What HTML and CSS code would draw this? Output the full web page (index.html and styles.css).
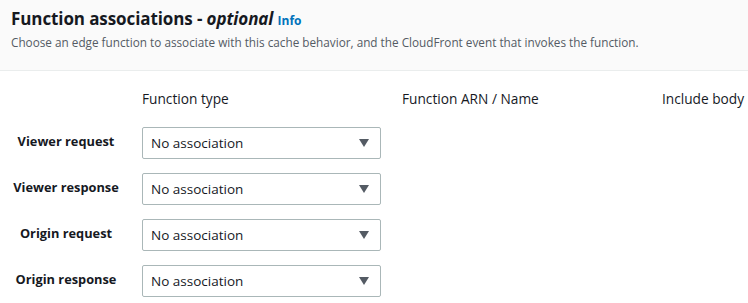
FILE: index.html
```html
<!DOCTYPE html>
<html lang="en">
<head>
    <meta charset="UTF-8">
    <title>Function associations</title>
    <link rel="stylesheet" href="styles.css">
</head>
<body>
    <div class="panel">
        <div class="panel-header">
            <h2>Function associations - <em>optional</em> <a class="info" href="#">Info</a></h2>
            <p class="description">Choose an edge function to associate with this cache behavior, and the CloudFront event that invokes the function.</p>
        </div>

        <div class="assoc-grid">
            <div></div>
            <div class="col-head">Function type</div>
            <div class="col-head">Function ARN / Name</div>
            <div class="col-head">Include body</div>

            <div class="row-label">Viewer request</div>
            <div class="select"><span>No association</span><span class="caret"></span></div>
            <div></div>
            <div></div>

            <div class="row-label">Viewer response</div>
            <div class="select"><span>No association</span><span class="caret"></span></div>
            <div></div>
            <div></div>

            <div class="row-label">Origin request</div>
            <div class="select"><span>No association</span><span class="caret"></span></div>
            <div></div>
            <div></div>

            <div class="row-label">Origin response</div>
            <div class="select"><span>No association</span><span class="caret"></span></div>
            <div></div>
            <div></div>
        </div>
    </div>
</body>
</html>
```

FILE: styles.css
```css
body {
    margin: 0;
    font-family: "Open Sans", "Noto Sans", sans-serif;
    color: #16191f;
    background: white;
}
.panel-header {
    background: #fafafa;
    border-bottom: 1px solid #eaeded;
    padding: 6px 12px 0 11px;
    height: 64px;
}
.panel-header h2 {
    margin: 0;
    font-size: 17px;
    font-weight: 700;
    line-height: 26px;
    letter-spacing: -0.1px;
}
.panel-header em {
    font-style: italic;
}
.info {
    color: #0073bb;
    font-size: 12px;
    font-weight: 700;
    text-decoration: none;
    letter-spacing: 0;
}
.description {
    margin: 0;
    font-size: 11.75px;
    line-height: 16px;
    color: #545b64;
}
.assoc-grid {
    display: grid;
    grid-template-columns: 122px 240px 240px 1fr;
    column-gap: 20px;
    row-gap: 14px;
    padding-top: 18px;
}
.col-head {
    font-size: 13.7px;
    line-height: 20px;
    margin-bottom: 4px;
    white-space: nowrap;
}
.row-label {
    padding-left: 10px;
    text-align: center;
    font-size: 12.8px;
    font-weight: 700;
    line-height: 20px;
    align-self: center;
    margin-top: -4px;
    white-space: nowrap;
}
.select {
    height: 30px;
    border: 1px solid #aab7b8;
    border-radius: 2px;
    display: flex;
    align-items: center;
    justify-content: space-between;
    padding: 0 11px 0 8px;
    font-size: 13.5px;
    margin-right: 1px;
}
.caret {
    width: 0;
    height: 0;
    border-left: 5.5px solid transparent;
    border-right: 5.5px solid transparent;
    border-top: 8px solid #545b64;
}
```
